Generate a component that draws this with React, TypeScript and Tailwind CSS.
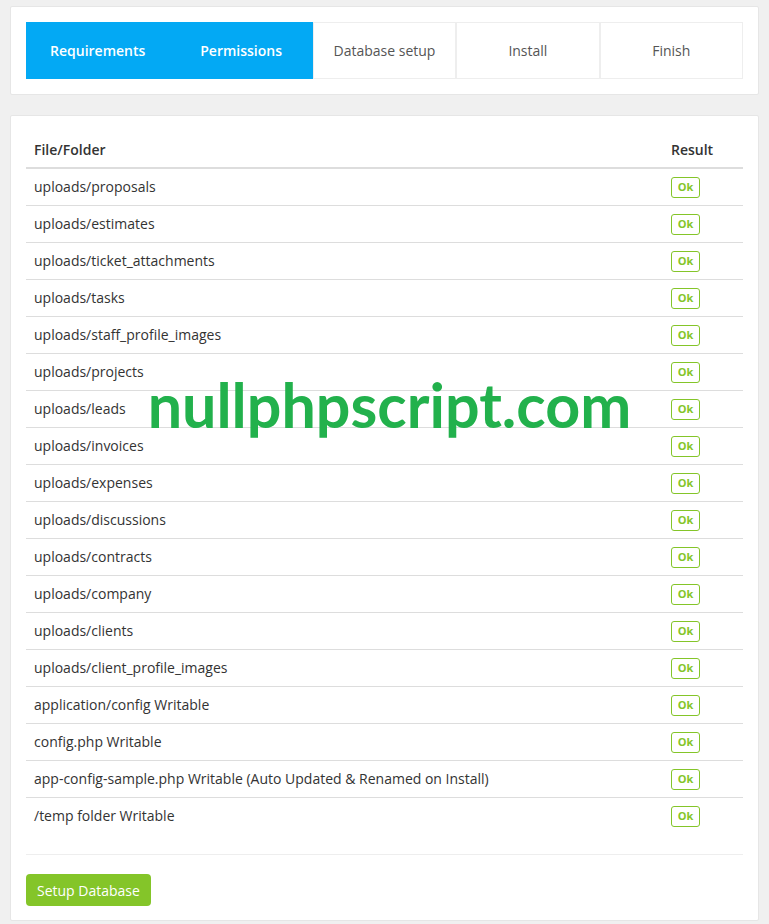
import React from "react";

const rows = [
  "uploads/proposals",
  "uploads/estimates",
  "uploads/ticket_attachments",
  "uploads/tasks",
  "uploads/staff_profile_images",
  "uploads/projects",
  "uploads/leads",
  "uploads/invoices",
  "uploads/expenses",
  "uploads/discussions",
  "uploads/contracts",
  "uploads/company",
  "uploads/clients",
  "uploads/client_profile_images",
  "application/config Writable",
  "config.php Writable",
  "app-config-sample.php Writable (Auto Updated & Renamed on Install)",
  "/temp folder Writable",
];

const steps = [
  { label: "Requirements", done: true },
  { label: "Permissions", done: true },
  { label: "Database setup", done: false },
  { label: "Install", done: false },
  { label: "Finish", done: false },
];

export default function App() {
  return (
    <div className="relative min-h-[924px] bg-[#f0f0f0] pt-[6px] font-['Open_Sans',sans-serif] text-[14px] text-[#333]">
      <div className="ml-[10px] w-[749px] rounded-[2px] border border-[#e6e6e6] bg-white p-[15px]">
        <div className="grid h-[57px] grid-cols-5">
          {steps.map((s) =>
            s.done ? (
              <div key={s.label} className="flex items-center justify-center bg-[#03a9f4] font-semibold text-white">
                {s.label}
              </div>
            ) : (
              <div key={s.label} className="flex items-center justify-center border border-[#eee] text-[#555]">
                {s.label}
              </div>
            )
          )}
        </div>
      </div>

      <div className="ml-[10px] mt-[20px] w-[749px] rounded-[2px] border border-[#e6e6e6] bg-white px-[15px] pt-[16px] pb-[14px]">
        <table className="w-full border-collapse">
          <thead>
            <tr className="border-b-2 border-[#ddd]">
              <th className="h-[36px] px-2 text-left font-semibold">File/Folder</th>
              <th className="w-[80px] px-2 text-left font-semibold">Result</th>
            </tr>
          </thead>
          <tbody>
            {rows.map((r, i) => (
              <tr key={r} className={i < rows.length - 1 ? "border-b border-[#ddd]" : ""}>
                <td className="h-[37px] px-2 leading-[20px]">{r}</td>
                <td className="px-2">
                  <span className="inline-flex h-[21px] w-[29px] items-center justify-center rounded-[3px] border border-[#84c529] text-[11px] font-bold text-[#84c529]">
                    Ok
                  </span>
                </td>
              </tr>
            ))}
          </tbody>
        </table>
        <div className="mt-[20px] border-t border-[#eee] pt-[19px]">
          <button className="h-[32px] rounded-[4px] bg-[#84c529] px-[11px] text-[14px] text-white">
            Setup Database
          </button>
        </div>
      </div>

      <div className="pointer-events-none absolute left-0 right-0 top-[369px] pl-[10px] text-center font-['Lato',sans-serif] text-[61px] font-bold leading-[72px] text-[#22b14c]">
        nullphpscript.com
      </div>
    </div>
  );
}
